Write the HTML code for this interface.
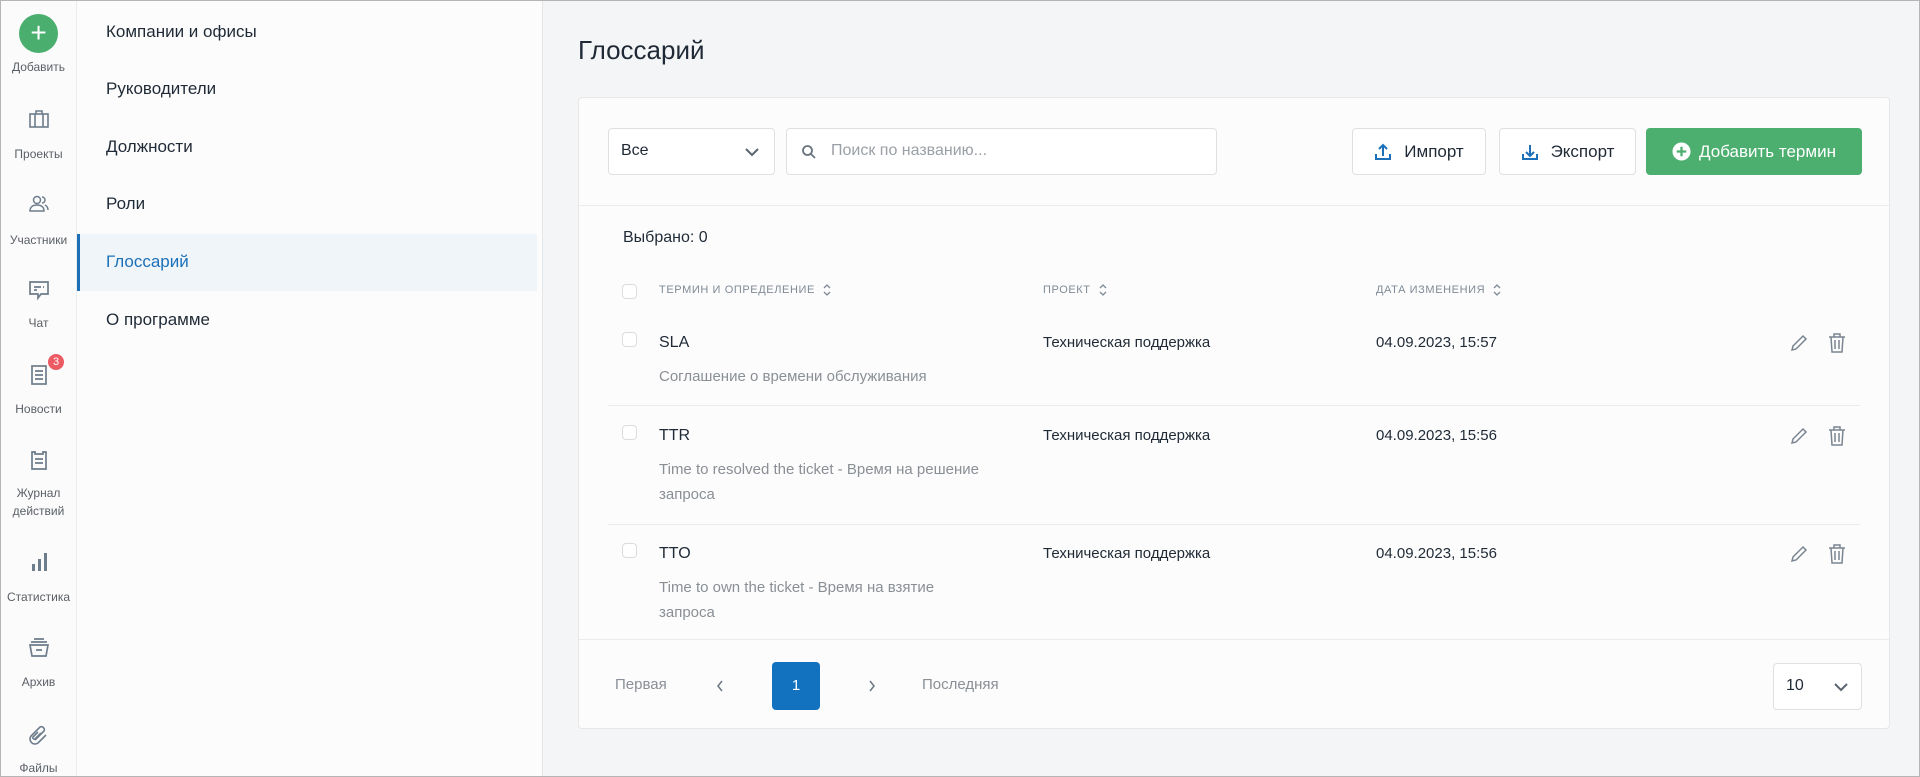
<!DOCTYPE html>
<html><head><meta charset="utf-8"><style>
*{box-sizing:border-box;margin:0;padding:0}
body{width:1920px;height:777px;overflow:hidden;background:#f4f5f6;font-family:"Liberation Sans",sans-serif;color:#1f2a36;position:relative}
.frame{position:absolute;inset:0;border:1px solid #b5b5b5;pointer-events:none;z-index:9}
.rail{position:absolute;left:0;top:0;width:77px;height:777px;background:#fbfbfb;border-right:1px solid #ececec}
.ri{position:absolute;left:0;width:77px;text-align:center;font-size:12px;color:#5a5f66;line-height:18px}
.ico{position:absolute;left:27px;width:24px;height:24px}
.side{position:absolute;left:77px;top:0;width:466px;height:777px;background:#fcfcfc;border-right:1px solid #e6e6e6}
.mi{position:absolute;left:29px;font-size:17px;color:#1f2a36;line-height:24px}
.act{position:absolute;left:0;top:234px;width:460px;height:57px;background:#f0f5fa;border-left:3px solid #1b70b8}
h1{position:absolute;left:578px;top:35px;font-size:26px;font-weight:normal;color:#1f2a36}
.card{position:absolute;left:578px;top:97px;width:1312px;height:632px;background:#fcfcfc;border:1px solid #e7e7e7;border-radius:4px}
.box{position:absolute;border:1px solid #e0e0e0;border-radius:4px;background:#fff;height:47px;top:30px}
.btn{position:absolute;top:30px;height:47px;border-radius:4px;font-size:17px;display:flex;align-items:center;justify-content:center;gap:12px}
.sep{position:absolute;left:0;right:0;height:1px;background:#ebebeb}
.cb{position:absolute;left:43px;width:15px;height:15px;border:1px solid #dcdcdc;border-radius:4px;background:#fff}
.th{position:absolute;font-size:11px;color:#7f8a96;letter-spacing:.6px;display:flex;align-items:center;gap:8px}
.t{position:absolute;font-size:16px;color:#1f2a36}
.d{position:absolute;font-size:15px;color:#8a8f95;line-height:25px;width:360px}
</style></head><body>
<div class="frame"></div>
<div class="rail">
 <div style="position:absolute;left:19px;top:14px;width:39px;height:39px;border-radius:50%;background:#4aaf6e;color:#fff;font-size:28px;line-height:37px;text-align:center">+</div>
 <div class="ri" style="top:58px">Добавить</div>
 <svg class="ico" style="top:107px" viewBox="0 0 24 24" fill="none" stroke="#6d7d8c" stroke-width="1.6"><rect x="3" y="7" width="18" height="13"/><path d="M9 7V4h6v3M8 7v13M16 7v13"/></svg>
 <div class="ri" style="top:145px">Проекты</div>
 <svg class="ico" style="top:192px" viewBox="0 0 24 24" fill="none" stroke="#6d7d8c" stroke-width="1.5"><circle cx="10" cy="8" r="3.5"/><path d="M3 19c0-4 3-6 7-6s7 2 7 6z"/><path d="M15 5a3 3 0 0 1 0 6M18 13c2 1 3 3 3 5"/></svg>
 <div class="ri" style="top:231px">Участники</div>
 <svg class="ico" style="top:278px" viewBox="0 0 24 24" fill="none" stroke="#6d7d8c" stroke-width="1.7"><path d="M3 4h18v12h-7l-3 4v-4H3z"/><path d="M7 9h7M16 9h1M7 12h3"/></svg>
 <div class="ri" style="top:314px">Чат</div>
 <svg class="ico" style="top:363px" viewBox="0 0 24 24" fill="none" stroke="#6d7d8c" stroke-width="1.7"><rect x="5" y="3" width="14" height="18"/><path d="M8 8h8M8 12h8M8 16h8"/></svg>
 <div style="position:absolute;left:48px;top:354px;width:16px;height:16px;border-radius:50%;background:#ec5a64;color:#fff;font-size:11px;line-height:16px;text-align:center">3</div>
 <div class="ri" style="top:400px">Новости</div>
 <svg class="ico" style="top:448px" viewBox="0 0 24 24" fill="none" stroke="#6d7d8c" stroke-width="1.7"><path d="M8 4H5v17h14V4h-3M8 3v3h8V3M8 11h8M8 15h8"/></svg>
 <div class="ri" style="top:484px">Журнал<br>действий</div>
 <svg class="ico" style="top:550px" viewBox="0 0 24 24" fill="#6d7d8c"><rect x="5" y="14" width="3" height="7"/><rect x="11" y="9" width="3" height="12"/><rect x="17" y="3" width="3" height="18"/></svg>
 <div class="ri" style="top:588px">Статистика</div>
 <svg class="ico" style="top:636px" viewBox="0 0 24 24" fill="none" stroke="#6d7d8c" stroke-width="1.7"><path d="M7 3h10M4 6h16M3 9h18l-2 11H5zM9 14h6"/></svg>
 <div class="ri" style="top:673px">Архив</div>
 <svg class="ico" style="top:721px" viewBox="0 0 24 24" fill="none" stroke="#6d7d8c" stroke-width="1.6"><path d="M8 19l9-9a3 3 0 0 0-4-4l-9 9a5 5 0 0 0 7 7l8-8M11 11l-5 5a1.5 1.5 0 0 0 2 2l6-6"/></svg>
 <div class="ri" style="top:759px">Файлы</div>
</div>
<div class="side">
 <div class="act"></div>
 <div class="mi" style="top:20px">Компании и офисы</div>
 <div class="mi" style="top:77px">Руководители</div>
 <div class="mi" style="top:135px">Должности</div>
 <div class="mi" style="top:192px">Роли</div>
 <div class="mi" style="top:250px;color:#1b70b8">Глоссарий</div>
 <div class="mi" style="top:308px">О программе</div>
</div>
<h1>Глоссарий</h1>
<div class="card">
 <div class="box" style="left:29px;width:167px"><span style="position:absolute;left:12px;top:13px;font-size:16px">Все</span>
  <svg style="position:absolute;right:14px;top:16px" width="16" height="14" viewBox="0 0 16 14"><path d="M2 4l6 6 6-6" fill="none" stroke="#5a6570" stroke-width="2"/></svg></div>
 <div class="box" style="left:207px;width:431px"><svg style="position:absolute;left:14px;top:15px" width="16" height="16" viewBox="0 0 16 16" fill="none" stroke="#6b7580" stroke-width="1.8"><circle cx="6.5" cy="6.5" r="4.5"/><path d="M10 10l4 4"/></svg>
  <span style="position:absolute;left:44px;top:13px;font-size:16px;color:#9aa0a6">Поиск по названию...</span></div>
 <div class="btn" style="left:773px;width:134px;border:1px solid #e0e0e0;background:#fff;color:#1f2a36"><svg width="18" height="18" viewBox="0 0 18 18" fill="none" stroke="#1b70b8" stroke-width="2"><path d="M9 13V2M5 6l4-4 4 4M2 11v5h14v-5"/></svg>Импорт</div>
 <div class="btn" style="left:920px;width:137px;border:1px solid #e0e0e0;background:#fff;color:#1f2a36"><svg width="18" height="18" viewBox="0 0 18 18" fill="none" stroke="#1b70b8" stroke-width="2"><path d="M9 2v11M5 9l4 4 4-4M2 11v5h14v-5"/></svg>Экспорт</div>
 <div class="btn" style="left:1067px;width:216px;background:#4caf6f;color:#fff;gap:8px"><svg width="19" height="19" viewBox="0 0 20 20"><circle cx="10" cy="10" r="9.5" fill="#fff"/><path d="M10 5v10M5 10h10" stroke="#4caf6f" stroke-width="2.4"/></svg>Добавить термин</div>
 <div class="sep" style="top:107px"></div>
 <div class="t" style="left:44px;top:131px">Выбрано: 0</div>
 <div class="cb" style="top:186px"></div>
 <div class="th" style="left:80px;top:185px">ТЕРМИН И ОПРЕДЕЛЕНИЕ <svg width="8" height="14" viewBox="0 0 8 14" fill="none" stroke="#7f8a96" stroke-width="1.3"><path d="M1 5l3-3 3 3M1 9l3 3 3-3"/></svg></div>
 <div class="th" style="left:464px;top:185px">ПРОЕКТ <svg width="8" height="14" viewBox="0 0 8 14" fill="none" stroke="#7f8a96" stroke-width="1.3"><path d="M1 5l3-3 3 3M1 9l3 3 3-3"/></svg></div>
 <div class="th" style="left:797px;top:185px">ДАТА ИЗМЕНЕНИЯ <svg width="8" height="14" viewBox="0 0 8 14" fill="none" stroke="#7f8a96" stroke-width="1.3"><path d="M1 5l3-3 3 3M1 9l3 3 3-3"/></svg></div>

 <div class="cb" style="top:234px"></div>
 <div class="t" style="left:80px;top:236px">SLA</div>
 <div class="d" style="left:80px;top:266px">Соглашение о времени обслуживания</div>
 <div class="t" style="left:464px;top:236px;font-size:15px">Техническая поддержка</div>
 <div class="t" style="left:797px;top:236px;font-size:15px">04.09.2023, 15:57</div>
 <div class="sep" style="top:307px;left:29px;right:29px"></div>

 <div class="cb" style="top:327px"></div>
 <div class="t" style="left:80px;top:329px">TTR</div>
 <div class="d" style="left:80px;top:359px">Time to resolved the ticket - Время на решение запроса</div>
 <div class="t" style="left:464px;top:329px;font-size:15px">Техническая поддержка</div>
 <div class="t" style="left:797px;top:329px;font-size:15px">04.09.2023, 15:56</div>
 <div class="sep" style="top:426px;left:29px;right:29px"></div>

 <div class="cb" style="top:445px"></div>
 <div class="t" style="left:80px;top:447px">TTO</div>
 <div class="d" style="left:80px;top:477px;width:310px">Time to own the ticket - Время на взятие запроса</div>
 <div class="t" style="left:464px;top:447px;font-size:15px">Техническая поддержка</div>
 <div class="t" style="left:797px;top:447px;font-size:15px">04.09.2023, 15:56</div>
 <div class="sep" style="top:541px"></div>

 <svg style="position:absolute;left:1209px;top:234px" width="22" height="22" viewBox="0 0 22 22" fill="none" stroke="#7a8591" stroke-width="1.5"><path d="M4 18l1-4L15 4l3 3L8 17z"/></svg>
 <svg style="position:absolute;left:1248px;top:234px" width="20" height="22" viewBox="0 0 20 22" fill="none" stroke="#7a8591" stroke-width="1.5"><path d="M2 5h16M7 5V2h6v3M4 5l1 15h10l1-15M8 8v9M12 8v9"/></svg>
 <svg style="position:absolute;left:1209px;top:327px" width="22" height="22" viewBox="0 0 22 22" fill="none" stroke="#7a8591" stroke-width="1.5"><path d="M4 18l1-4L15 4l3 3L8 17z"/></svg>
 <svg style="position:absolute;left:1248px;top:327px" width="20" height="22" viewBox="0 0 20 22" fill="none" stroke="#7a8591" stroke-width="1.5"><path d="M2 5h16M7 5V2h6v3M4 5l1 15h10l1-15M8 8v9M12 8v9"/></svg>
 <svg style="position:absolute;left:1209px;top:445px" width="22" height="22" viewBox="0 0 22 22" fill="none" stroke="#7a8591" stroke-width="1.5"><path d="M4 18l1-4L15 4l3 3L8 17z"/></svg>
 <svg style="position:absolute;left:1248px;top:445px" width="20" height="22" viewBox="0 0 20 22" fill="none" stroke="#7a8591" stroke-width="1.5"><path d="M2 5h16M7 5V2h6v3M4 5l1 15h10l1-15M8 8v9M12 8v9"/></svg>

 <div class="t" style="left:36px;top:578px;font-size:15px;color:#8a8f95">Первая</div>
 <svg style="position:absolute;left:136px;top:581px" width="10" height="14" viewBox="0 0 10 14"><path d="M7 2L3 7l4 5" fill="none" stroke="#6b7580" stroke-width="1.5"/></svg>
 <div style="position:absolute;left:193px;top:564px;width:48px;height:48px;border-radius:4px;background:#1272c0;color:#fff;font-size:15px;line-height:48px;text-align:center">1</div>
 <svg style="position:absolute;left:288px;top:581px" width="10" height="14" viewBox="0 0 10 14"><path d="M3 2l4 5-4 5" fill="none" stroke="#6b7580" stroke-width="1.5"/></svg>
 <div class="t" style="left:343px;top:578px;font-size:15px;color:#8a8f95">Последняя</div>
 <div class="box" style="left:1194px;top:565px;width:89px"><span style="position:absolute;left:12px;top:13px;font-size:16px">10</span>
  <svg style="position:absolute;right:12px;top:16px" width="16" height="14" viewBox="0 0 16 14"><path d="M2 4l6 6 6-6" fill="none" stroke="#5a6570" stroke-width="2"/></svg></div>
</div>
</body></html>
